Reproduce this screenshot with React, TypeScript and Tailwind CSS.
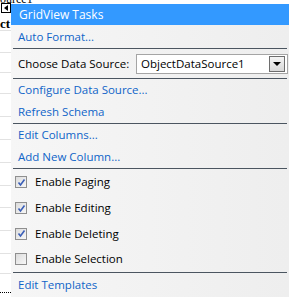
import React from 'react';

const font = { fontFamily: '"Open Sans", "Noto Sans", sans-serif' };

const gridLines = [30, 52, 72, 93, 116, 139, 162, 185, 207, 230, 253, 273];

function Separator() {
  return <div className="mx-[2px] h-px bg-[#4b5560]" />;
}

function LinkRow({ label, h }: { label: string; h: string }) {
  return (
    <div className={`${h} flex items-center pl-[7px] text-[#0f64c8]`}>
      {label}
    </div>
  );
}

function CheckRow({ label, checked, h }: { label: string; checked: boolean; h: string }) {
  return (
    <div className={`${h} flex items-center pl-[4px] gap-[8px] text-black`}>
      <span className="w-[12px] h-[12px] border border-[#8f8f8f] bg-gradient-to-br from-[#dcdcdc] to-[#f7f7f7] flex items-center justify-center">
        {checked && (
          <svg width="9" height="9" viewBox="0 0 9 9">
            <path d="M1.5 4.5 L3.5 7 L7.5 1.5" fill="none" stroke="#3b5fb8" strokeWidth="1.6" />
          </svg>
        )}
      </span>
      {label}
    </div>
  );
}

export default function App() {
  return (
    <div className="relative w-[292px] h-[300px] bg-white overflow-hidden text-[11.5px] leading-none" style={font}>
      {/* grid behind the smart tag */}
      <div className="absolute left-0 top-0 w-[12px] h-[300px]">
        {gridLines.map((y) => (
          <div key={y} className="absolute left-0 right-0 h-px bg-[#e2e2e2]" style={{ top: y }} />
        ))}
        <div className="absolute left-0 top-[292px] w-[11px] border-t border-dotted border-black" />
      </div>
      <div className="absolute left-0 top-[-7px] text-[12px] text-black" style={{ fontFamily: '"Liberation Serif", serif' }}>
        ource1
      </div>
      <div className="absolute left-[1px] top-[3px] w-[10px] h-[10px] border border-black bg-white flex items-center justify-center">
        <span className="w-0 h-0 border-y-[3px] border-y-transparent border-r-[4px] border-r-black" />
      </div>
      <div className="absolute left-0 top-[17px] text-[13px] font-bold text-black" style={{ fontFamily: '"Liberation Serif", serif' }}>
        ct
      </div>

      {/* smart tag panel */}
      <div className="absolute left-[11px] top-[4px] w-[278px] h-[293px] bg-gradient-to-r from-[#f6f6f6] to-[#eeeeee] flex flex-col">
        <div className="h-[21px] bg-[#3399ff] text-white flex items-center pl-[8px] text-[12px]">GridView Tasks</div>
        <LinkRow label="Auto Format..." h="h-[23px]" />
        <Separator />
        <div className="h-[29px] flex items-center pl-[7px] text-black">
          <span className="w-[118px]">Choose Data Source:</span>
          <div className="w-[152px] h-[20px] border border-[#a5a5a5] bg-white flex items-center justify-between pl-[4px] pr-[2px]">
            <span>ObjectDataSource1</span>
            <span className="w-[16px] h-[16px] border border-[#6e6e6e] bg-gradient-to-b from-[#f4f4f4] to-[#d8d8d8] flex items-center justify-center">
              <span className="w-0 h-0 border-x-[4px] border-x-transparent border-t-[4px] border-t-black" />
            </span>
          </div>
        </div>
        <Separator />
        <LinkRow label="Configure Data Source..." h="h-[22px]" />
        <LinkRow label="Refresh Schema" h="h-[22px]" />
        <Separator />
        <LinkRow label="Edit Columns..." h="h-[22px]" />
        <LinkRow label="Add New Column..." h="h-[22px]" />
        <Separator />
        <CheckRow label="Enable Paging" checked h="h-[26px]" />
        <CheckRow label="Enable Editing" checked h="h-[26px]" />
        <CheckRow label="Enable Deleting" checked h="h-[25px]" />
        <CheckRow label="Enable Selection" checked={false} h="h-[26px]" />
        <Separator />
        <LinkRow label="Edit Templates" h="h-[23px]" />
      </div>
    </div>
  );
}
